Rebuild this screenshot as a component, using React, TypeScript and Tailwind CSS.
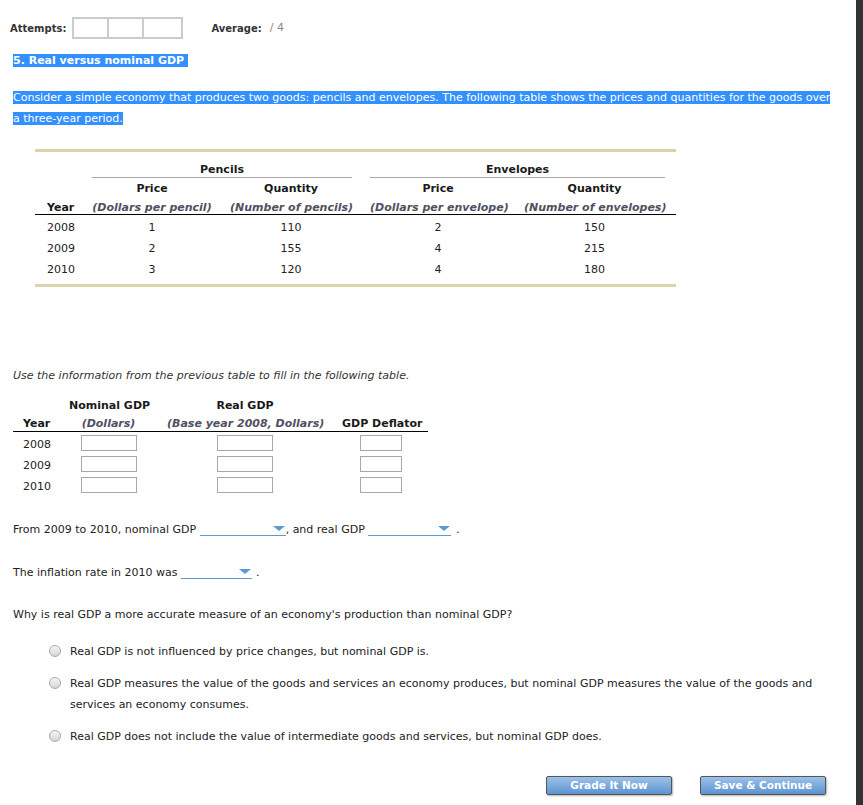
import { FC } from 'react';

const years = ['2008', '2009', '2010'];

const goods = [
  { year: '2008', pPrice: '1', pQty: '110', ePrice: '2', eQty: '150' },
  { year: '2009', pPrice: '2', pQty: '155', ePrice: '4', eQty: '215' },
  { year: '2010', pPrice: '3', pQty: '120', ePrice: '4', eQty: '180' },
];

const options = [
  'Real GDP is not influenced by price changes, but nominal GDP is.',
  'Real GDP measures the value of the goods and services an economy produces, but nominal GDP measures the value of the goods and services an economy consumes.',
  'Real GDP does not include the value of intermediate goods and services, but nominal GDP does.',
];

const Dropdown: FC<{ width: string }> = ({ width }) => (
  <span className={`inline-flex ${width} h-[14px] items-center justify-end border-b border-[#5b9bd5] pr-[1px] align-[2px]`}>
    <span className="h-0 w-0 border-l-[6px] border-r-[6px] border-t-[5px] border-l-transparent border-r-transparent border-t-[#5b9bd5]" />
  </span>
);

const Radio: FC = () => (
  <span className="mt-[4px] h-[12px] w-[12px] shrink-0 rounded-full border border-[#a9a9a9] bg-linear-to-b from-[#f6f6f6] to-[#d6d6d6]" />
);

const Box: FC<{ w: string }> = ({ w }) => <span className={`block ${w} h-[16px] border border-[#a8a8a8] bg-white`} />;

export default function App() {
  return (
    <div className="flex h-[805px] w-[863px] overflow-hidden bg-white font-['DejaVu_Sans',Verdana,sans-serif] text-[11px] text-[#222]">
      <div className="flex-1">
        {/* Attempts */}
        <div className="mt-[17px] flex h-[22px] items-center pl-[10px]">
          <span className="text-[10px] font-bold text-[#333]">Attempts:</span>
          <div className="ml-[6px] flex h-[22px] w-[111px] border-2 border-[#ccc]">
            <span className="w-[35px] border-r-2 border-[#ccc]" />
            <span className="w-[35px] border-r-2 border-[#ccc]" />
            <span className="flex-1" />
          </div>
          <span className="ml-[28px] text-[10px] font-bold text-[#333]">Average:</span>
          <span className="ml-[8px] text-[#888]">/ 4</span>
        </div>

        {/* Title */}
        <div className="mt-[11px] pl-[13px] leading-[21px]">
          <span className="bg-[#3390ff] font-bold text-white">5. Real versus nominal GDP&nbsp;</span>
        </div>

        <p className="mt-[16px] w-[838px] pl-[13px] leading-[21px]">
          <span className="bg-[#3390ff] text-white">
            Consider a simple economy that produces two goods: pencils and envelopes. The following table shows the prices and quantities for the goods over a three-year period.
          </span>
        </p>

        {/* Table 1 */}
        <div className="ml-[35px] mt-[20px] w-[641px] border-y-[3px] border-[#dcd3ad] pb-[3px] pl-[12px] pr-[11px] text-[#1a1a1a]">
          <div className="flex h-[26px] gap-[18px] pt-[10px] font-bold">
            <span className="w-[27px]" />
            <span className="w-[260px] border-b border-[#a9a9a9] text-center">Pencils</span>
            <span className="w-[295px] border-b border-[#a9a9a9] text-center">Envelopes</span>
          </div>
          <div className="flex h-[18px] items-center gap-[18px] pt-[4px] font-bold">
            <span className="w-[27px]" />
            <span className="w-[120px] text-center">Price</span>
            <span className="w-[122px] text-center">Quantity</span>
            <span className="w-[136px] text-center">Price</span>
            <span className="w-[141px] text-center">Quantity</span>
          </div>
          <div className="-ml-[12px] -mr-[11px] flex h-[19px] items-center gap-[18px] border-b border-black pl-[12px] pr-[11px] pt-[6px]">
            <span className="w-[27px] font-bold">Year</span>
            <span className="w-[120px] whitespace-nowrap text-center font-bold italic text-[#505060]">(Dollars per pencil)</span>
            <span className="w-[122px] whitespace-nowrap text-center font-bold italic text-[#505060]">(Number of pencils)</span>
            <span className="w-[136px] whitespace-nowrap text-center font-bold italic text-[#505060]">(Dollars per envelope)</span>
            <span className="w-[141px] whitespace-nowrap text-center font-bold italic text-[#505060]">(Number of envelopes)</span>
          </div>
          <div className="pt-[3px]">
            {goods.map((g) => (
              <div key={g.year} className="flex h-[21px] items-center gap-[18px] text-[#222]">
                <span className="w-[27px]">{g.year}</span>
                <span className="w-[120px] text-center">{g.pPrice}</span>
                <span className="w-[122px] text-center">{g.pQty}</span>
                <span className="w-[136px] text-center">{g.ePrice}</span>
                <span className="w-[141px] text-center">{g.eQty}</span>
              </div>
            ))}
          </div>
        </div>

        <p className="mt-[80px] pl-[13px] leading-[17px] italic text-[#333]">
          Use the information from the previous table to fill in the following table.
        </p>

        {/* Table 2 */}
        <div className="ml-[13px] mt-[14px] w-[415px] text-[#1a1a1a]">
          <div className="flex h-[17px] items-center gap-[19px] pl-[10px] pr-[8px] font-bold">
            <span className="w-[27px]" />
            <span className="w-[79px] whitespace-nowrap text-center">Nominal GDP</span>
            <span className="w-[156px] text-center">Real GDP</span>
            <span className="w-[78px]" />
          </div>
          <div className="flex h-[17px] items-center gap-[19px] border-b border-black pl-[10px] pr-[8px] pt-[2px]">
            <span className="w-[27px] font-bold">Year</span>
            <span className="w-[79px] text-center font-bold italic text-[#505060]">(Dollars)</span>
            <span className="w-[156px] whitespace-nowrap text-center font-bold italic text-[#505060]">(Base year 2008, Dollars)</span>
            <span className="w-[78px] whitespace-nowrap text-center font-bold">GDP Deflator</span>
          </div>
          {years.map((y) => (
            <div key={y} className="flex h-[21px] items-center gap-[19px] pl-[10px] pr-[8px] text-[#222]">
              <span className="w-[27px] pt-[6px]">{y}</span>
              <span className="flex w-[79px] justify-center">
                <Box w="w-[56px]" />
              </span>
              <span className="flex w-[156px] justify-center">
                <Box w="w-[56px]" />
              </span>
              <span className="flex w-[78px] justify-center">
                <Box w="w-[42px]" />
              </span>
            </div>
          ))}
        </div>

        {/* Fill-ins */}
        <p className="mt-[24px] pl-[13px] leading-[21px]">
          From 2009 to 2010, nominal GDP <Dropdown width="w-[86px]" />, and real GDP <Dropdown width="w-[83px]" />
          <span className="ml-[5px]">.</span>
        </p>
        <p className="mt-[22px] pl-[13px] leading-[21px]">
          The inflation rate in 2010 was <Dropdown width="w-[71px]" />
          <span className="ml-[4px]">.</span>
        </p>

        <p className="mt-[21px] pl-[13px] leading-[21px]">
          Why is real GDP a more accurate measure of an economy's production than nominal GDP?
        </p>

        {/* Options */}
        <div className="mt-[16px] flex flex-col gap-[11px] pl-[49px] pr-[13px]">
          {options.map((o) => (
            <label key={o} className="flex gap-[9px] leading-[21px]">
              <Radio />
              <span className="max-w-[772px]">{o}</span>
            </label>
          ))}
        </div>

        {/* Buttons */}
        <div className="mt-[29px] flex justify-end gap-[28px] pr-[30px]">
          <button className="h-[19px] w-[126px] rounded-[2px] border border-[#555] bg-linear-to-b from-[#9cc1e9] to-[#5d94d0] text-[10.5px] font-bold text-white shadow-[1px_1px_2px_rgba(0,0,0,0.3)]">
            Grade It Now
          </button>
          <button className="h-[19px] w-[126px] rounded-[2px] border border-[#555] bg-linear-to-b from-[#9cc1e9] to-[#5d94d0] text-[10.5px] font-bold text-white shadow-[1px_1px_2px_rgba(0,0,0,0.3)]">
            Save &amp; Continue
          </button>
        </div>
      </div>
      <div className="w-[7px] shrink-0 bg-[#333]" />
    </div>
  );
}
